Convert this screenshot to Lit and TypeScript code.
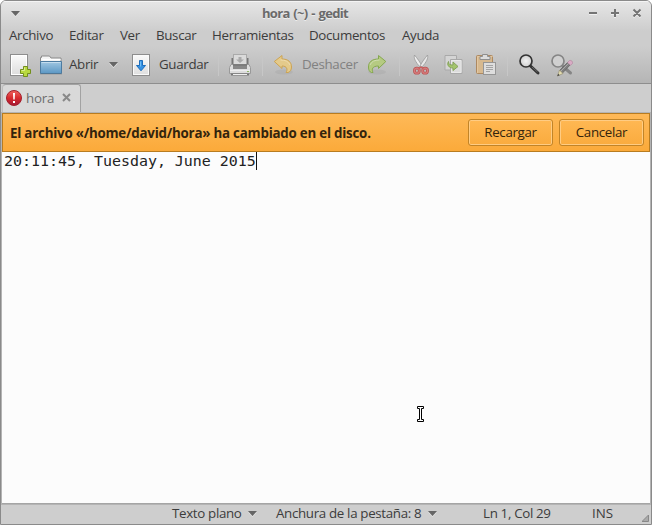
import { LitElement, html, css, svg } from "lit";
import { customElement, property } from "lit/decorators.js";

const icons: Record<string, unknown> = {
  new: svg`
    <rect x="1.5" y="1.5" width="17" height="21" fill="#eee" stroke="#8d8d8d"/>
    <rect x="2.5" y="2.5" width="15" height="19" fill="url(#paper)" stroke="#fff"/>
    <path d="M14.5 13.5h4v3h3v4h-3v3h-4v-3h-3v-4h3z" fill="#b9d940" stroke="#738f1c"/>
    <path d="M15.5 14.500v3h-3" fill="none" stroke="#dcef94"/>`,
  folder: svg`
    <path d="M1.500 9V4.500h1v-1.500h8l1.500 2h10v4z" fill="#f4f4f4" stroke="#8b8b8b"/>
    <path d="M3.500 6.500h18" stroke="#fff"/>
    <path d="M1.500 8.500h21v12h-21z" fill="url(#blue)" stroke="#4c7ba1"/>
    <path d="M2.500 9.500h19" stroke="#c3dcee"/>
    <path d="M1 21h22" stroke="#666" opacity=".35"/>`,
  save: svg`
    <rect x="3.500" y="1.500" width="17" height="21" fill="url(#paper)" stroke="#8d8d8d"/>
    <rect x="4.500" y="2.500" width="15" height="19" fill="none" stroke="#fafafa"/>
    <path d="M10.500 7.500h3v5h3L12 17.800 7.500 12.500h3z" fill="#3692e4" stroke="#1d6dbb"/>
    <path d="M11.500 8.500v5" stroke="#70bdf4"/>`,
  print: svg`
    <path d="M4.500 5v7M19.500 5v7" stroke="#777" stroke-width="2"/>
    <rect x="5.500" y="1.500" width="13" height="12" fill="#dadada" stroke="#aaa"/>
    <path d="M10.500 4h3v2.500h2.500L12 10 8 6.500h2.500z" fill="#aaa"/>
    <path d="M3 11.500h18l1.500 3v6h-21v-6z" fill="#ddd" stroke="#999"/>
    <path d="M5 11h14v5H5z" fill="#888"/><path d="M5 12h14" stroke="#707070"/>
    <path d="M2 17.500h20" stroke="#eee"/><path d="M3 20.500h18v2H3z" fill="#777"/>
    <path d="M5 21.500h14" stroke="#eee"/><path d="M19 18.500h2" stroke="#91b769"/>`,
  undo: svg`
    <ellipse cx="13" cy="19" rx="9" ry="2.500" fill="#777" opacity=".12"/>
    <path d="M3.300 8.500L11 2.500v3.500c6 0 9.500 3 9.500 8 0 3-1.500 5-3.500 5.500h-2c2-3 1-6.500-4-6.500v2.500z" fill="#e4ca8b" stroke="#cda452"/>
    <path d="M9.500 7c5 0 8 1.500 9.500 5" fill="none" stroke="#efdcad"/>`,
  redo: svg`
    <ellipse cx="11" cy="19" rx="9" ry="2.500" fill="#777" opacity=".12"/>
    <path d="M19.800 8.500L12.500 2.500v3.500C6 6 2.500 9 2.500 14c0 3 1 5 3 5.500h1.500c-1.500-3-1-6.500 5.500-6.500v2.500z" fill="#b5ca82" stroke="#85a84e"/>
    <path d="M13.500 7c-5 0-8 1.500-9.500 5" fill="none" stroke="#d1deb1"/>`,
  cut: svg`
    <path d="M5.500 2c-1 3 1 7 5.500 12l2-1C11 9 8 5 5.500 2z" fill="#eee" stroke="#999" stroke-width=".8"/>
    <path d="M18.500 2c1 3-1 7-5.500 12l-2-1C13 9 16 5 18.500 2z" fill="#e7e7e7" stroke="#999" stroke-width=".8"/>
    <g fill="none" stroke="#b95353" stroke-width="2.800"><rect x="5.500" y="15.200" width="4.800" height="5" rx="2.300"/><rect x="13.700" y="15.200" width="4.800" height="5" rx="2.300"/></g>
    <g fill="none" stroke="#d77d7d" stroke-width="1.200"><rect x="5.500" y="15.200" width="4.800" height="5" rx="2.300"/><rect x="13.700" y="15.200" width="4.800" height="5" rx="2.300"/></g>
    <path d="M9.500 15.500l2.500-1.500 2.500 1.500" fill="none" stroke="#c95e5e" stroke-width="1.500"/>`,
  copy: svg`
    <path d="M3 2.500h11.500v14.500H3z" fill="#d4d4d4" stroke="#a9a9a9"/>
    <path d="M8.500 6.500h11.500v14H8.500z" fill="#dcdcdc" stroke="#a9a9a9"/>
    <path d="M9.500 7.500h9.500v12H9.500z" fill="none" stroke="#e9e9e9"/>
    <path d="M6.500 8.500c0 3 1.500 3.500 4.500 3.500V9l5 4.500-5 4v-2.500C7 15 4.500 12 6.500 8.500z" fill="#a3c46c" stroke="#85a35a"/>`,
  paste: svg`
    <rect x="2.500" y="2.500" width="16" height="18" rx="1" fill="#d7b98f" stroke="#ad8961"/>
    <path d="M3.500 20V3.500h15" fill="none" stroke="#e3c7a1"/>
    <path d="M6 3.500h2.500v-2h5v2H16v3H6z" fill="#ddd" stroke="#8f8f8f"/>
    <rect x="9.500" y="9.500" width="12" height="12" fill="#dedede" stroke="#969696"/>
    <path d="M12 12.500h7M12 14.500h7M12 16.500h7M12 18.500h4" stroke="#a4a4a4"/>`,
  find: svg`
    <path d="M13.500 13l7.500 7" stroke="#333" stroke-width="3" stroke-linecap="round"/>
    <path d="M15 14l5.500 5" stroke="#777" stroke-width=".8"/>
    <circle cx="9" cy="8" r="6" fill="url(#glass)" stroke="#333" stroke-width="1.700"/>`,
  replace: svg`
    <path d="M13 13.500l7.500 6.500" stroke="#858585" stroke-width="3" stroke-linecap="round"/>
    <circle cx="8" cy="8" r="6" fill="#d0d0d0" stroke="#858585" stroke-width="1.700"/>
    <path d="M9.500 17.500L18 9l2.500 2.500-8.500 9z" fill="#7f7f7f" stroke="#666" stroke-width=".8"/>
    <path d="M11 18L19 10" stroke="#aaa"/>
    <path d="M9.500 17L7.500 23l5.500-2.500z" fill="#e2dcb0" stroke="#989174" stroke-width=".7"/>
    <path d="M7.200 23.200l1-2.500 1.500 1.500z" fill="#444"/>
    <path d="M17.500 9.500l2-2c2-.5 3.500 1 3 3l-2 1.800z" fill="#d9abc5" stroke="#b48ba2" stroke-width=".7"/>`,
};

@customElement("tool-icon")
class ToolIcon extends LitElement {
  @property() name = "new";
  static styles = css`
    :host { display: block; width: 24px; height: 25px; }
    svg { display: block; }
  `;
  render() {
    return html`<svg width="24" height="25" viewBox="0 0 24 25">
      <defs>
        <linearGradient id="paper" x2="0" y2="1"><stop stop-color="#fafafa"/><stop offset="1" stop-color="#dedede"/></linearGradient>
        <linearGradient id="blue" x2="0" y2="1"><stop stop-color="#a1c7e2"/><stop offset="1" stop-color="#5b97c4"/></linearGradient>
        <radialGradient id="glass"><stop stop-color="#f1f1f1"/><stop offset="1" stop-color="#cfcfcf"/></radialGradient>
      </defs>${icons[this.name]}</svg>`;
  }
}

const arrow = html`<svg class="arrow" width="9" height="6" viewBox="0 0 9 6"><path d="M.5 1.500L4.500 5.700L8.500 1.500" stroke="#e4e4e4" fill="none" stroke-width=".8"/><path d="M0 0h9L4.500 5z" fill="#666"/></svg>`;

@customElement("app-root")
class AppRoot extends LitElement {
  static styles = css`
    :host { display: block; width: 652px; height: 525px; background: #fff; }
    * { box-sizing: border-box; }
    .window {
      width: 652px; height: 525px; display: flex; flex-direction: column;
      border: 1px solid #8a8a8a; border-radius: 6px 6px 0 0; background: #cecece;
      font: 13.330px/18px "Open Sans", "Noto Sans", sans-serif; letter-spacing: -.33px; color: #3c3c3c;
      white-space: nowrap; overflow: hidden;
    }
    .head { height: 83px; border-bottom: 1px solid #8e8e8e; box-shadow: inset 0 1px #f4f4f4;
      background: linear-gradient(#e6e6e6, #cdcdcd 30px, #cdcdcd 45px, #b5b5b5); }
    .title { height: 25px; display: flex; align-items: center; padding: 0 9px 0 10px; }
    .title .arrow { margin-top: 1px; }
    .name { flex: 1; padding-left: 242px; margin-bottom: 2px;
      font-weight: 700; font-size: 13px; color: #6a6a6a; letter-spacing: -.7px; word-spacing: 1.100px; text-shadow: 0 1px #eee; }
    .menu { height: 17px; display: grid; align-items: center; padding-left: 8px; margin-bottom: 2px;
      grid-template-columns: 60px 51px 36px 56px 97px 93px 60px; }
    .tools { height: 38px; display: flex; align-items: center; padding: 2px 0 0 8px; }
    .tools .arrow { margin-bottom: 1px; }
    .sep { width: 1px; height: 21px; background: #c7c7c7; margin-left: 9px; }
    .tools .label { margin: 0 0 3px 6px; }
    .tools tool-icon { margin-left: 9px; }
    .tools .i-new, .tools .i-redo { margin-left: 0; }
    .tools .i-folder { margin-left: 6px; }
    .tools .i-save { margin-left: 11px; }
    .tools .i-undo, .tools .i-paste { margin-left: 8px; }
    .l-open { width: 40px; }
    .l-save { width: 50px; }
    .tools .l-undo { width: 64px; margin-left: 7px; color: #818181; }
    .i-print + .sep { margin-left: 10px; }
    .tabs { height: 29px; display: flex; padding-left: 1px; }
    .tab { width: 79px; height: 29px; display: flex; align-items: center; padding: 0 0 3px 3px;
      background: #d9d9d9; border: 1px solid #a2a2a2; border-bottom: 0; border-left-color: #bdbdbd; border-radius: 4px 3px 0 0; color: #6d6d6d; }
    .tab .word { width: 36px; margin-left: 4px; letter-spacing: -.2px; }
    .rest { flex: 1; border-bottom: 1px solid #a5a5a5; }
    .body { height: 391px; margin: 0 1px; display: flex; flex-direction: column; background: #fcfcfc;
      border-bottom: 1px solid #a5a5a5; box-shadow: 0 0 0 1px #b4b4b4; }
    .bar { height: 39px; display: flex; align-items: center; border: 1px solid #b87c20; padding: 0 5px 0 7px;
      background: linear-gradient(#feb958, #fbaa3a); color: #33240d; }
    .bar .msg { flex: 1; font-weight: 700; letter-spacing: -.22px; }
    .btn { width: 85px; height: 27px; margin-left: 6px; border: 1px solid #c18428; border-radius: 3px;
      box-shadow: inset 0 0 0 1px #ffcc83; background: linear-gradient(#ffb853, #faab3e); text-align: center; line-height: 25px; }
    .editor { height: 350px; padding-left: 2px; display: flex; align-items: flex-start; position: relative; color: #222;
      font: 14.940px/19px "DejaVu Sans Mono", monospace; letter-spacing: 0; }
    .caret { width: 1px; height: 18px; background: #111; }
    .pointer { position: absolute; left: 415px; top: 254px; }
    .status { height: 19px; display: flex; align-items: center; }
    .status span { margin-bottom: 2px; }
    .status .arrow { flex: none; margin-top: 1px; }
    .s1 { width: 76px; margin-left: 171px; }
    .s2 { width: 152px; margin-left: 19px; }
    .s3 { width: 109px; margin-left: 46px; }
    .s4 { letter-spacing: 0; }
    .grip { margin-left: auto; margin-right: 2px; margin-top: 9px; }
  `;
  render() {
    return html`<div class="window">
      <div class="head">
        <div class="title">${arrow}<span class="name">hora (~) - gedit</span>
          <svg width="53" height="11" viewBox="0 0 53 11">
            <g transform="translate(0 1)" stroke="#f0f0f0" stroke-width="2" fill="none"><path d="M0 5h8M22 5h8M26 1v8M44.500 1.500l7 7M51.500 1.500l-7 7"/></g>
            <path d="M0 5h8M22 5h8M26 1v8M44.500 1.500l7 7M51.500 1.500l-7 7" stroke="#747474" stroke-width="2" fill="none"/>
          </svg></div>
        <div class="menu">${["Archivo", "Editar", "Ver", "Buscar", "Herramientas", "Documentos", "Ayuda"].map((m) => html`<span>${m}</span>`)}</div>
        <div class="tools">
          <tool-icon class="i-new" name="new"></tool-icon>
          <tool-icon class="i-folder" name="folder"></tool-icon>
          <span class="label l-open">Abrir</span>${arrow}
          <tool-icon class="i-save" name="save"></tool-icon>
          <span class="label l-save">Guardar</span>
          <span class="sep"></span>
          <tool-icon class="i-print" name="print"></tool-icon>
          <span class="sep"></span>
          <tool-icon class="i-undo" name="undo"></tool-icon>
          <span class="label l-undo">Deshacer</span>
          <tool-icon class="i-redo" name="redo"></tool-icon>
          <span class="sep"></span>
          <tool-icon name="cut"></tool-icon>
          <tool-icon name="copy"></tool-icon>
          <tool-icon class="i-paste" name="paste"></tool-icon>
          <span class="sep"></span>
          <tool-icon name="find"></tool-icon>
          <tool-icon name="replace"></tool-icon>
        </div>
      </div>
      <div class="tabs">
        <div class="tab">
          <svg width="16" height="16" viewBox="0 0 16 16"><defs><linearGradient id="red" x2="0" y2="1"><stop stop-color="#ef6560"/><stop offset=".5" stop-color="#d82a2d"/><stop offset="1" stop-color="#a21936"/></linearGradient></defs>
            <circle cx="8" cy="8" r="7.500" fill="url(#red)" stroke="#a3202d"/><path d="M7 3h2l-.3 6.500H7.300zM7 11h2v2H7z" fill="#fff"/></svg>
          <span class="word">hora</span>
          <svg width="9" height="9" viewBox="0 0 9 9"><path d="M1 1l7 7M8 1L1 8" stroke="#898989" stroke-width="2"/></svg>
        </div>
        <div class="rest"></div>
      </div>
      <div class="body">
        <div class="bar"><span class="msg">El archivo «/home/david/hora» ha cambiado en el disco.</span>
          <span class="btn">Recargar</span><span class="btn">Cancelar</span></div>
        <div class="editor"><span class="code">20:11:45, Tuesday, June 2015</span><span class="caret"></span>
          <svg class="pointer" width="7" height="17" viewBox="0 0 7 17"><path d="M.5 .5h6v2h-2v11h2v2h-6v-2h2v-11h-2z" fill="#fff" stroke="#000"/></svg>
        </div>
      </div>
      <div class="status">
        <span class="s1">Texto plano</span>${arrow}
        <span class="s2">Anchura de la pestaña: 8</span>${arrow}
        <span class="s3">Ln 1, Col 29</span>
        <span class="s4">INS</span>
        <svg class="grip" width="7" height="7" viewBox="0 0 7 7"><path d="M0 6.500L6.500 0v6.500z" fill="#aaa" stroke="#888"/></svg>
      </div>
    </div>`;
  }
}
